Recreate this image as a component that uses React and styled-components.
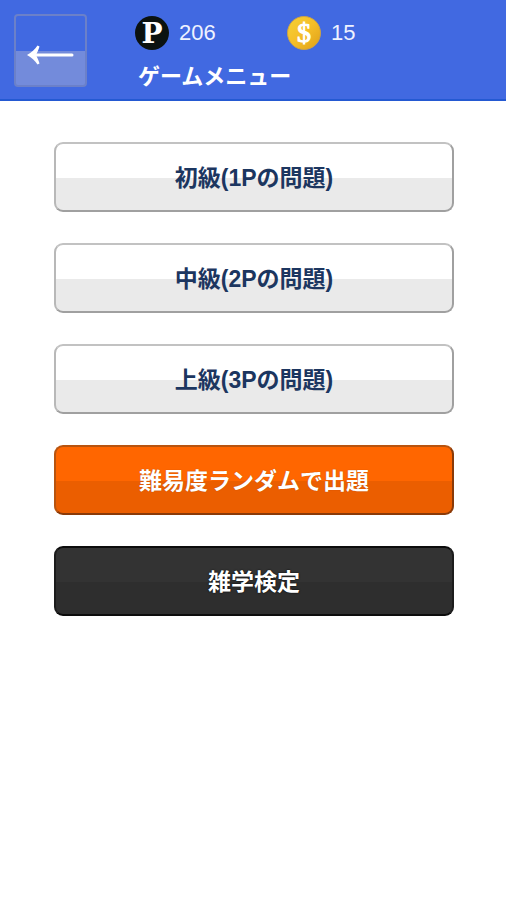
import { useState } from "react"
import styled, { createGlobalStyle } from "styled-components"

const menu = [
    { id: "easy", label: "初級(1Pの問題)", variant: "light" },
    { id: "normal", label: "中級(2Pの問題)", variant: "light" },
    { id: "hard", label: "上級(3Pの問題)", variant: "light" },
    { id: "random", label: "難易度ランダムで出題", variant: "orange" },
    { id: "exam", label: "雑学検定", variant: "dark" },
]

const variants = {
    light: {
        text: "#1c3660",
        top: "#ffffff",
        bottom: "#eaeaea",
        border: "#c2c2c2 #a0a0a0 #a0a0a0 #b8b8b8",
        shadow: "none",
    },
    orange: {
        text: "#ffffff",
        top: "#ff6600",
        bottom: "#eb5e00",
        border: "#b8540f #8a3a08 #8a3a08 #b8540f",
        shadow: "0 0 1px #a84400",
    },
    dark: {
        text: "#ffffff",
        top: "#333333",
        bottom: "#2e2e2e",
        border: "#0c0c0c #1c1c1c #0c0c0c #1c1c1c",
        shadow: "0 0 2px #000000",
    },
}

export default function App() {
    const [selected, setSelected] = useState(null)

    return (
        <>
            <GlobalStyle />
            <Header>
                <BackButton type="button" aria-label="戻る" onClick={() => setSelected(null)}>
                    <ArrowIcon />
                </BackButton>
                <Info>
                    <Scores>
                        <Score>
                            <PointIcon />
                            <span>206</span>
                        </Score>
                        <Score>
                            <CoinIcon />
                            <span>15</span>
                        </Score>
                    </Scores>
                    <Title>ゲームメニュー</Title>
                </Info>
            </Header>
            <Menu>
                {menu.map(item => (
                    <MenuButton
                        key={item.id}
                        type="button"
                        $variant={variants[item.variant]}
                        aria-pressed={selected === item.id}
                        onClick={() => setSelected(item.id)}
                    >
                        {item.label}
                    </MenuButton>
                ))}
            </Menu>
        </>
    )
}

function ArrowIcon() {
    return (
        <svg width="50" height="22" viewBox="0 0 50 22" fill="none" aria-hidden="true">
            <path d="M7 11H46" stroke="#fff" strokeWidth="3" strokeLinecap="round" />
            <path d="M1 11C5.500 8.500 9 5.500 11.500 1.500L13.500 2.500C12.500 6 11 9 10 11C11 13 12.500 16 13.500 19.500L11.500 20.500C9 16.500 5.500 13.500 1 11Z" fill="#fff" />
        </svg>
    )
}

function PointIcon() {
    return (
        <svg width="34" height="34" viewBox="0 0 34 34" aria-hidden="true">
            <circle cx="17" cy="17" r="17" fill="#0b1210" />
            <PointSymbol x="17" y="27">P</PointSymbol>
        </svg>
    )
}

function CoinIcon() {
    return (
        <svg width="34" height="34" viewBox="0 0 34 34" aria-hidden="true">
            <defs>
                <linearGradient id="gold" x1="0" y1="0" x2="1" y2="1">
                    <stop offset="0" stopColor="#f5d136" />
                    <stop offset="0.5" stopColor="#f5be28" />
                    <stop offset="1" stopColor="#dd9f18" />
                </linearGradient>
            </defs>
            <circle cx="17" cy="17" r="16.500" fill="url(#gold)" stroke="#c9a24a" strokeWidth="1" />
            <CoinSymbol x="17" y="26">$</CoinSymbol>
        </svg>
    )
}

const GlobalStyle = createGlobalStyle`
    * {
        box-sizing: border-box;
    }
    body {
        margin: 0;
        background: #ffffff;
        font-family: "Liberation Sans", "Noto Sans CJK JP", sans-serif;
    }
`

const Header = styled.header`
    display: flex;
    align-items: flex-start;
    gap: 48px;
    padding: 14px 14px 6px;
    background: #4169e1;
    border-bottom: 2px solid #2459d2;
`

const BackButton = styled.button`
    display: flex;
    justify-content: center;
    flex-shrink: 0;
    width: 73px;
    height: 73px;
    padding: 28px 0 0;
    border: 2px solid #6b80c9;
    border-radius: 4px;
    background: linear-gradient(#4169e1 51%, #738bdb 51%);
    cursor: pointer;

    svg {
        flex-shrink: 0;
    }
`

const Info = styled.div`
    flex: 1;
    padding-top: 2px;
`

const Scores = styled.div`
    display: flex;
`

const Score = styled.div`
    display: flex;
    align-items: center;
    gap: 10px;
    width: 152px;
    height: 34px;
    color: #eef2ff;
    font-size: 22px;
`

const Title = styled.h1`
    margin: 11px 0 0;
    padding-left: 3px;
    color: #ffffff;
    font-size: 22px;
    font-weight: bold;
    line-height: 32px;
`

const Menu = styled.main`
    display: flex;
    flex-direction: column;
    gap: 31px;
    padding: 41px 52px 41px 54px;
`

const MenuButton = styled.button`
    width: 100%;
    height: 70px;
    padding: 0 16px 3px;
    border: 2px solid;
    border-color: ${props => props.$variant.border};
    border-radius: 9px;
    background: linear-gradient(${props => props.$variant.top} 51%, ${props => props.$variant.bottom} 51%);
    color: ${props => props.$variant.text};
    font-family: inherit;
    font-size: 23px;
    font-weight: bold;
    text-shadow: ${props => props.$variant.shadow};
    cursor: pointer;
`

const PointSymbol = styled.text`
    fill: #ffffff;
    font-family: "DejaVu Serif", serif;
    font-size: 28px;
    font-weight: bold;
    text-anchor: middle;
`

const CoinSymbol = styled.text`
    fill: #ffffff;
    stroke: #ffffff;
    stroke-width: 1px;
    font-family: "Liberation Serif", serif;
    font-size: 28px;
    text-anchor: middle;
`
